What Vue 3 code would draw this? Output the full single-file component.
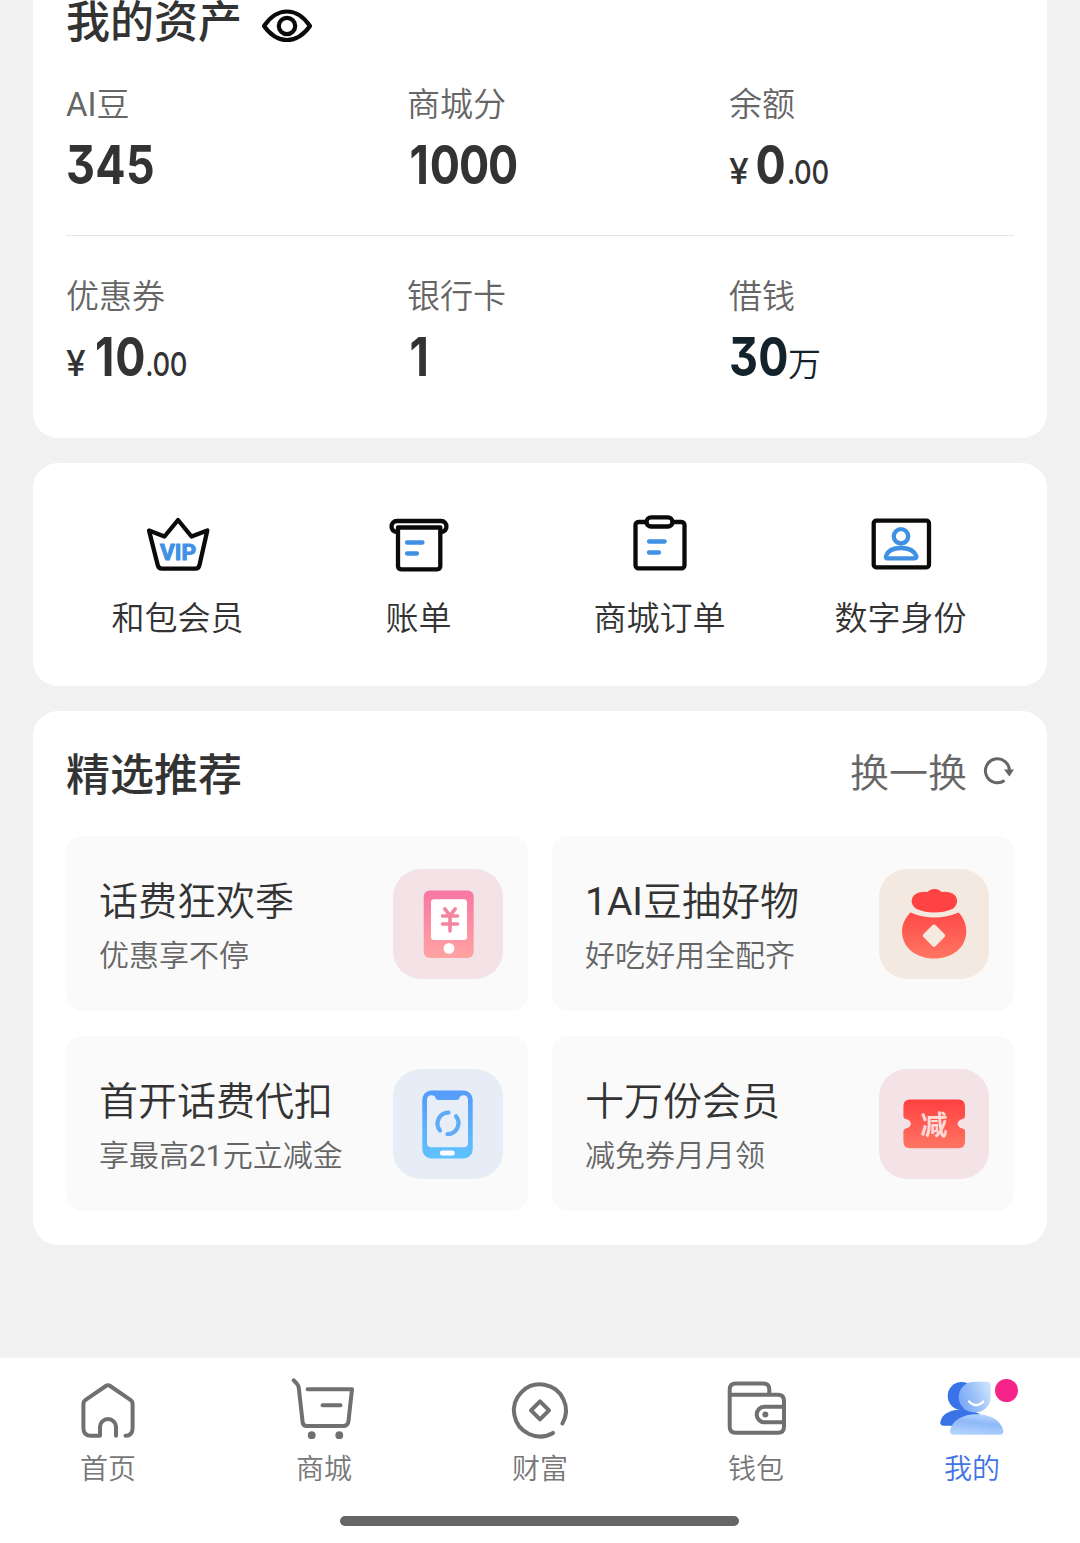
<template>
  <div class="page">
    <main class="content">
      <!-- 我的资产 -->
      <section class="card assets">
        <div class="assets-head">
          <h2>我的资产</h2>
          <svg class="eye" width="52" height="36" viewBox="0 0 52 36" fill="none" stroke="#0a0a0a" stroke-width="4.2">
            <path d="M3 18 Q13 3.5 26 3.5 T49 18 Q39 32 26 32 T3 18Z" stroke-linejoin="round" />
            <circle cx="26" cy="18" r="8.2" />
          </svg>
        </div>
        <div v-for="(row, i) in assets" :key="i" class="asset-row">
          <div v-for="item in row" :key="item.label" class="asset">
            <div class="asset-label">{{ item.label }}</div>
            <div class="asset-value" :class="{ loan: item.unit }">
              <span v-if="item.prefix" class="yen">{{ item.prefix }}</span>
              <span class="num" :class="{ one: item.value.startsWith('1') }">{{ item.value }}</span>
              <span v-if="item.decimal" class="decimal">{{ item.decimal }}</span>
              <span v-if="item.unit" class="unit">{{ item.unit }}</span>
            </div>
          </div>
        </div>
      </section>

      <!-- 快捷入口 -->
      <section class="card shortcuts">
        <div v-for="item in shortcuts" :key="item.icon" class="shortcut">
          <svg width="66" height="66" viewBox="0 0 66 66" fill="none" stroke="#0a0a0a" stroke-width="4.3" stroke-linejoin="round" stroke-linecap="round">
            <template v-if="item.icon === 'vip'">
              <path d="M4 18.5 L19.5 24.5 L33 8 L46.5 24.5 L62.3 18.5 L54.5 53 Q53.7 56.7 50.5 56.7 H17 Q13.6 56.7 12.7 53Z" />
              <text class="vip-text" x="33" y="47.8" text-anchor="middle" textLength="36" lengthAdjust="spacingAndGlyphs">VIP</text>
            </template>
            <template v-else-if="item.icon === 'bill'">
              <path d="M11 20 C3.5 20 4 9 11 9 H55 C62 9 62.5 20 55 20" />
              <path d="M12 15.5 H54.3 V54 Q54.3 57.3 51 57.3 H15.3 Q12 57.3 12 54Z" />
              <path d="M21 30.5 H36.5 M21 41.5 H31" stroke="#4090e4" />
            </template>
            <template v-else-if="item.icon === 'order'">
              <rect x="8.5" y="10" width="49" height="46.3" rx="3" />
              <rect x="19.5" y="5.3" width="26" height="9.2" rx="4.6" fill="#fff" />
              <path d="M22 29.5 H37.7 M22 40.5 H32" stroke="#4090e4" />
            </template>
            <template v-else>
              <rect x="5.7" y="8.7" width="55.3" height="46.6" rx="2.5" />
              <circle cx="33" cy="24.3" r="7.2" stroke="#4090e4" />
              <path d="M18 44 C20 38 27 36 33 36 C39 36 46 38 48.3 44 Q48.8 46.4 46.5 46.4 H19.6 Q17.4 46.4 18 44Z" stroke="#4090e4" />
            </template>
          </svg>
          <span>{{ item.label }}</span>
        </div>
      </section>

      <!-- 精选推荐 -->
      <section class="card recommend">
        <div class="recommend-head">
          <h2>精选推荐</h2>
          <div class="refresh">
            <span>换一换</span>
            <svg width="32" height="32" viewBox="0 0 32 32">
              <path d="M22.5 24.5 A12 12 0 1 1 27.4 15" fill="none" stroke="#666" stroke-width="3" />
              <path d="M22 13.5 H32 L27.4 20.5Z" fill="#666" />
            </svg>
          </div>
        </div>
        <div class="tiles">
          <div v-for="item in tiles" :key="item.icon" class="tile">
            <div class="tile-text">
              <div class="tile-title">{{ item.title }}</div>
              <div class="tile-sub">{{ item.sub }}</div>
            </div>
            <svg class="tile-icon" :class="item.icon" width="110" height="110" viewBox="0 0 110 110">
              <template v-if="item.icon === 'phone'">
                <defs>
                  <linearGradient id="pink" x1="0" y1="0" x2="0" y2="1">
                    <stop offset="0" stop-color="#f777a4" />
                    <stop offset="1" stop-color="#ffa3a2" />
                  </linearGradient>
                </defs>
                <rect x="30.7" y="21.5" width="50" height="67.5" rx="6" fill="url(#pink)" />
                <rect x="38" y="30.3" width="36" height="40.7" rx="3" fill="#fff" />
                <circle cx="56" cy="79.4" r="5.4" fill="#fff" />
                <path d="M51.8 39.8 L57 46.5 L62.2 39.8 M49.5 47 H64.5 M49.5 55 H64.5 M57 47 V62" fill="none" stroke="#f5849f" stroke-width="3.6" stroke-linecap="round" />
              </template>
              <template v-else-if="item.icon === 'bag'">
                <defs>
                  <linearGradient id="red" x1="0" y1="0" x2="0" y2="1">
                    <stop offset="0" stop-color="#ff4a48" />
                    <stop offset="1" stop-color="#ff7661" />
                  </linearGradient>
                </defs>
                <path d="M40 23.5 Q45 22.5 48.5 23 Q51 20 55.5 20 Q60 20 62.5 23 Q67 22.5 71 23.5 C80 26 80 36 73.5 40 Q65 43.5 55 43.5 Q46 43.5 37.5 40 C30.5 36 31 26 40 23.5Z" fill="#ff4343" />
                <path d="M31.5 43.5 Q43 48.5 55.3 48.5 Q68 48.5 79.5 43.5 C84 48 87.3 55 87.3 62 C87.3 79 73 89.5 55.2 89.5 C37.5 89.5 23 79 23 62 C23 55 27 48 31.5 43.5Z" fill="url(#red)" />
                <rect x="46.5" y="58.2" width="17" height="17" rx="2" transform="rotate(45 55 66.7)" fill="#f5e9e0" />
              </template>
              <template v-else-if="item.icon === 'mobile'">
                <defs>
                  <linearGradient id="blue" x1="0" y1="0" x2="0" y2="1">
                    <stop offset="0" stop-color="#559bf9" />
                    <stop offset="1" stop-color="#60c2fd" />
                  </linearGradient>
                </defs>
                <rect x="29.3" y="21.5" width="50.4" height="68" rx="9" fill="url(#blue)" />
                <path d="M38.5 26.3 Q42 26.3 42.5 29 Q43 31 45.5 31 H63.5 Q66 31 66.5 29 Q67 26.3 70.5 26.3 Q75 26.3 75 31 V74 Q75 78.3 70.5 78.3 H38.5 Q34 78.3 34 74 V31 Q34 26.3 38.5 26.3Z" fill="#e8eef7" />
                <rect x="47" y="81.4" width="14.6" height="5" rx="2" fill="#fff" />
                <path d="M55.5 43.6 A11 11 0 0 0 47 61.5 M54.5 65.2 A11 11 0 0 0 63 47.3" fill="none" stroke="#5fabf5" stroke-width="4.2" stroke-linecap="round" />
              </template>
              <template v-else>
                <defs>
                  <linearGradient id="ticket" x1="0" y1="0" x2="0" y2="1">
                    <stop offset="0" stop-color="#ff4041" />
                    <stop offset="1" stop-color="#ff7562" />
                  </linearGradient>
                </defs>
                <path d="M31 30.5 H79.5 Q86 30.5 86 37 V47.5 Q86 49.5 83.5 50 C77 51.5 77 58 83.5 59.5 Q86 60 86 62 V72.5 Q86 79.3 79.5 79.3 H31 Q24.4 79.3 24.4 72.5 V62 Q24.4 60 27 59.5 C33.5 58 33.5 51.5 27 50 Q24.4 49.5 24.4 47.5 V37 Q24.4 30.5 31 30.5Z" fill="url(#ticket)" />
                <text class="ticket-text" x="55" y="65.5" text-anchor="middle">减</text>
              </template>
            </svg>
          </div>
        </div>
      </section>
    </main>

    <!-- 底部导航 -->
    <nav class="tabbar">
      <div class="tabs">
        <div v-for="tab in tabs" :key="tab.icon" class="tab" :class="{ active: tab.icon === activeTab }">
          <div class="tab-icon">
            <svg width="66" height="66" viewBox="0 0 66 66" fill="none" stroke="#707070" stroke-width="4" stroke-linecap="round" stroke-linejoin="round">
              <path v-if="tab.icon === 'home'" d="M50.5 59.8 Q57.6 59.8 57.6 52 V28 Q57.6 25.3 55.4 23.8 L35.2 10 Q33 8.5 30.8 10 L10.6 23.8 Q8.4 25.3 8.4 28 V52 Q8.4 59.8 16 59.8 H25 V51 A8 8 0 0 1 41 51 V59.8" />
              <template v-else-if="tab.icon === 'mall'">
                <path d="M2.8 4.3 L5.6 7.3 Q7.5 9.2 7.8 12 L11.6 46 Q12 50.1 16 50.1 H52 Q57 50.1 57.5 45 L61 13.3 H16.6 M31.5 29.2 H49.5" />
                <circle cx="20.7" cy="59.2" r="3.9" fill="#707070" stroke="none" />
                <circle cx="48.3" cy="59.2" r="3.9" fill="#707070" stroke="none" />
              </template>
              <path v-else-if="tab.icon === 'wealth'" d="M55.4 47.5 A26 26 0 1 0 46 56.9 M33 25.3 L42 34.3 L33 43.3 L24 34.3Z" />
              <template v-else-if="tab.icon === 'wallet'">
                <path d="M6.7 18.7 V13.4 Q6.7 7.4 12.7 7.4 H40.3 Q46.3 7.4 46.3 13.4 V18.7 M6.7 18.7 H55 Q61 18.7 61 24.7 V50.8 Q61 56.8 55 56.8 H12.7 Q6.7 56.8 6.7 50.8Z M60 30.7 H41.5 A7.8 7.8 0 0 0 41.5 46.3 H60" />
                <circle cx="42.3" cy="38.6" r="3" fill="#707070" stroke="none" />
              </template>
              <g v-else stroke="none">
                <defs>
                  <linearGradient id="face" x1="0" y1="0.7" x2="1" y2="0.3">
                    <stop offset="0" stop-color="#78a7f6" />
                    <stop offset="0.4" stop-color="#94bbf8" />
                    <stop offset="1" stop-color="#c8e1fc" />
                  </linearGradient>
                  <linearGradient id="body" x1="0.3" y1="1" x2="0.6" y2="0">
                    <stop offset="0" stop-color="#b3d4fd" />
                    <stop offset="0.6" stop-color="#8fb8f8" />
                    <stop offset="1" stop-color="#b6d6fc" />
                  </linearGradient>
                </defs>
                <ellipse cx="22.5" cy="20" rx="13.8" ry="14" fill="#3a72e8" />
                <path d="M1.3 46 C3 37 13 33.5 23 33.5 C32 33.5 39 36 42 40 L38 49.7 H5 Q0.8 49.7 1.3 46Z" fill="#3a72e8" />
                <path d="M35.5 5.8 H48 Q51.7 5.8 51.7 9.5 V21 C51.7 30 44.5 36.4 35.7 36.4 C27 36.4 19.7 30 19.7 21 C19.7 12 27 5.8 35.5 5.8Z" fill="url(#face)" />
                <path d="M30 25.5 Q37 33 44.3 25.5" stroke="#fff" stroke-width="2.4" />
                <path d="M11 55 C13 44 24 38.3 37.5 38.3 C51 38.3 62 44 64.3 55 Q64.6 58.7 61 58.7 H14.5 Q10.7 58.7 11 55Z" fill="url(#body)" />
              </g>
            </svg>
            <i v-if="tab.dot" class="dot"></i>
          </div>
          <span>{{ tab.label }}</span>
        </div>
      </div>
      <div class="home-bar"></div>
    </nav>
  </div>
</template>

<script setup>
import { ref } from 'vue';

const activeTab = ref('mine');

const assets = [
  [
    { label: 'AI豆', value: '345' },
    { label: '商城分', value: '1000' },
    { label: '余额', prefix: '¥', value: '0', decimal: '.00' }
  ],
  [
    { label: '优惠券', prefix: '¥', value: '10', decimal: '.00' },
    { label: '银行卡', value: '1' },
    { label: '借钱', value: '30', unit: '万' }
  ]
];

const shortcuts = [
  { icon: 'vip', label: '和包会员' },
  { icon: 'bill', label: '账单' },
  { icon: 'order', label: '商城订单' },
  { icon: 'identity', label: '数字身份' }
];

const tiles = [
  { icon: 'phone', title: '话费狂欢季', sub: '优惠享不停' },
  { icon: 'bag', title: '1AI豆抽好物', sub: '好吃好用全配齐' },
  { icon: 'mobile', title: '首开话费代扣', sub: '享最高21元立减金' },
  { icon: 'coupon', title: '十万份会员', sub: '减免券月月领' }
];

const tabs = [
  { icon: 'home', label: '首页' },
  { icon: 'mall', label: '商城' },
  { icon: 'wealth', label: '财富' },
  { icon: 'wallet', label: '钱包' },
  { icon: 'mine', label: '我的', dot: true }
];
</script>

<style>
body {
  margin: 0;
  background: #f1f1f1;
}
</style>

<style scoped>
.page {
  width: 1080px;
  height: 1543px;
  display: flex;
  flex-direction: column;
  overflow: hidden;
  background: #f1f1f1;
  color: #333;
  font-family: Roboto, "Noto Sans CJK SC DemiLight", "Noto Sans CJK SC", sans-serif;
  font-weight: 400;
}

.content {
  flex: 1;
  display: flex;
  flex-direction: column;
  gap: 25px;
  padding: 0 33px;
}

.card {
  box-sizing: border-box;
  background: #fff;
  border-radius: 25px;
}

h2 {
  margin: 0;
  font-family: Roboto, "Noto Sans CJK SC", sans-serif;
  font-size: 44px;
  line-height: 46px;
  font-weight: 500;
}

svg {
  display: block;
  flex: none;
}

/* 资产 */
.assets {
  height: 438px;
  padding: 0 33px;
  border-radius: 0 0 25px 25px;
}

.assets-head {
  display: flex;
  align-items: flex-start;
  gap: 19px;
  height: 48px;
}

.assets-head h2 {
  line-height: 47px;
}

.eye {
  margin-top: 8px;
}

.asset-row {
  display: grid;
  grid-template-columns: 341px 322px 1fr;
  padding: 38px 0 40px;
}

.asset-row + .asset-row {
  padding-top: 42px;
  border-top: 1px solid #e6e6e6;
}

.asset-label {
  margin-bottom: 11px;
  color: #666;
  font-size: 33px;
  line-height: 38px;
}

/* 数字用窄体 */
.asset-value {
  display: flex;
  align-items: baseline;
  width: 240px;
  height: 60px;
  line-height: 60px;
  font-family: Inter, "Noto Sans CJK SC DemiLight", "Noto Sans CJK SC", sans-serif;
  font-feature-settings: "cv09";
  transform: scaleX(0.83);
  transform-origin: 0 50%;
}

.num {
  font-size: 54px;
  font-weight: 650;
  letter-spacing: 0.4px;
}

.num.one {
  padding-left: 3px;
  letter-spacing: -1.2px;
}

.num.one::first-letter {
  letter-spacing: 1px;
}

.yen {
  width: 32px;
  font-size: 35px;
  font-weight: 500;
  transform: scaleX(1.22);
  transform-origin: 0 50%;
}

.decimal {
  margin-left: 1px;
  font-size: 33px;
  font-weight: 550;
  letter-spacing: -0.5px;
}

.unit {
  margin-left: -1px;
  font-size: 33px;
  transform: scaleX(1.205);
  transform-origin: 0 50%;
}

.loan {
  color: #14222c;
}

/* 快捷入口 */
.shortcuts {
  display: grid;
  grid-template-columns: repeat(4, 1fr);
  height: 223px;
  padding: 49px 26px 0 24px;
}

.shortcut {
  display: flex;
  flex-direction: column;
  align-items: center;
  gap: 21px;
  font-size: 33px;
  line-height: 40px;
}

.vip-text {
  fill: #4090e4;
  stroke: #4090e4;
  stroke-width: 1px;
  font-size: 22px;
  font-weight: 700;
}

/* 精选推荐 */
.recommend {
  height: 534px;
  padding: 38px 33px 0;
}

.recommend-head {
  display: flex;
  align-items: center;
  justify-content: space-between;
  height: 50px;
  margin-bottom: 37px;
}

.recommend-head h2 {
  padding-top: 4px;
}

.refresh {
  display: flex;
  align-items: center;
  gap: 15px;
  color: #666;
  font-size: 39px;
  line-height: 46px;
}

.refresh svg {
  margin-top: -5px;
}

.tiles {
  display: grid;
  grid-template-columns: 1fr 1fr;
  gap: 25px 24px;
}

.tile {
  box-sizing: border-box;
  display: flex;
  align-items: center;
  justify-content: space-between;
  height: 175px;
  padding: 0 25px 0 33px;
  border-radius: 16px;
  background: #fafafa;
}

.tile-text {
  padding-top: 7px;
}

.tile-title {
  margin-bottom: 8px;
  font-size: 39px;
  line-height: 50px;
}

.tile-sub {
  color: #666;
  font-size: 30px;
  line-height: 42px;
}

.tile-icon {
  border-radius: 28px;
}

.phone,
.coupon {
  background: #f3e3e7;
}

.bag {
  background: #f4e9e0;
}

.mobile {
  background: #e6edf7;
}

.ticket-text {
  fill: #ffdcd8;
  font-family: "Noto Sans CJK SC", sans-serif;
  font-size: 27px;
  font-weight: 700;
}

/* 底部导航 */
.tabbar {
  display: flex;
  flex-direction: column;
  align-items: center;
  height: 185px;
  background: #fff;
}

.tabs {
  display: grid;
  grid-template-columns: repeat(5, 1fr);
  width: 100%;
  height: 158px;
}

.tab {
  display: flex;
  flex-direction: column;
  align-items: center;
  gap: 10px;
  padding-top: 18px;
  color: #777;
  font-size: 28px;
  line-height: 36px;
}

.tab.active {
  color: #4374e4;
}

.tab-icon {
  position: relative;
}

.dot {
  position: absolute;
  top: 3px;
  right: -13px;
  width: 23px;
  height: 23px;
  border-radius: 50%;
  background: #f5238a;
}

.home-bar {
  width: 399px;
  height: 10px;
  margin-right: 2px;
  border-radius: 5px;
  background: #666;
}
</style>
